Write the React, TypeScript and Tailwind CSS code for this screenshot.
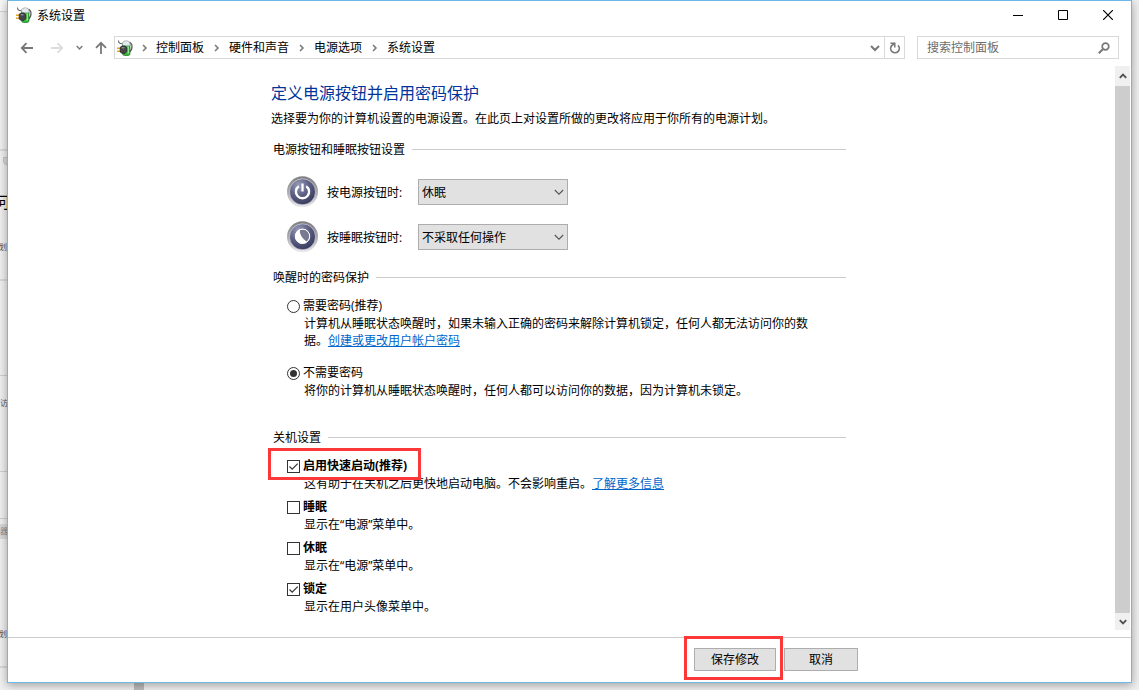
import { useState } from "react";
import type { ReactNode } from "react";

interface ChoiceProps {
  id: string;
  label: string;
  checked: boolean;
  onChange: () => void;
  highlighted?: boolean;
  children: ReactNode;
}

const crumbs = ["控制面板", "硬件和声音", "电源选项", "系统设置"];
const actions = ["不采取任何操作", "睡眠", "休眠", "关机"];

function Chevron({ className = "" }: { className?: string }) {
  return (
    <svg viewBox="0 0 10 10" className={className} fill="none" aria-hidden="true">
      <path d="M1 3l4 4 4-4" stroke="currentColor" strokeWidth="2" />
    </svg>
  );
}

function PowerPlugIcon() {
  return (
    <svg viewBox="0 0 16 16" className="size-4 shrink-0" aria-hidden="true">
      <path d="M1.500.5c0 2 1 3.200 3.500 3.200" fill="none" stroke="#666" strokeWidth="1.100" />
      <path d="M11.500 2.500c4.500-.5 4.500 6.500 1 9.500" fill="none" stroke="#555" strokeWidth="1.200" />
      <rect x="5.500" y="2" width="7.500" height="13.500" rx="2" fill="#35b53c" stroke="#2a6e2d" strokeWidth=".7" />
      <path d="M5.500 3.800c0-4 7.500-4 7.500 0v2H5.500z" fill="#e4eaee" stroke="#8a9699" strokeWidth=".6" />
      <path d="M10.500 6.500h1.500v7h-1.500z" fill="#8fe88c" />
      <path d="M0 8.300h4M0 11.300h4" stroke="#e8a91c" strokeWidth="1.600" />
      <path d="M3.200 7.200L5 6h3l1.800 2v3.500L8 13.300H5l-1.800-1.200z" fill="#45454a" stroke="#1d1d1f" strokeWidth=".7" />
      <path d="M4.800 7.800h2.700" stroke="#a5a5ab" />
    </svg>
  );
}

function RoundIcon({ kind }: { kind: "power" | "sleep" }) {
  return (
    <svg viewBox="0 0 32 32" className="size-8 shrink-0" aria-hidden="true">
      <defs>
        <linearGradient id={`${kind}-rim`} x1="0" y1="0" x2="0" y2="1">
          <stop offset="0" stopColor="#7e7e82" />
          <stop offset=".6" stopColor="#b4b4ba" />
          <stop offset="1" stopColor="#ededf0" />
        </linearGradient>
        <radialGradient id={`${kind}-face`} cx=".35" cy=".25" r=".8">
          <stop offset="0" stopColor="#9a9cba" />
          <stop offset=".5" stopColor="#5d5f83" />
          <stop offset="1" stopColor="#36385c" />
        </radialGradient>
      </defs>
      <circle cx="15.500" cy="15.800" r="15.500" fill={`url(#${kind}-rim)`} />
      <circle cx="15.500" cy="15.800" r="13" fill={`url(#${kind}-face)`} stroke="#e4e4ec" strokeWidth=".6" />
      {kind === "power" ? (
        <g fill="none" stroke="#fff" strokeWidth="2.300">
          <path d="M11.800 10.200a6.600 6.600 0 1 0 7.400 0" />
          <path d="M15.500 7.500v8" />
        </g>
      ) : (
        <g>
          <circle cx="15.500" cy="15.300" r="7.500" fill="#fff" />
          <path d="M13 8.800c-1 4 2.500 9 6.800 12 4.500-4 3-11.300-3.200-12.600z" fill="#777a92" />
          <circle cx="15.500" cy="15.300" r="7.200" fill="none" stroke="#fff" />
        </g>
      )}
    </svg>
  );
}

function Section({ title, className = "", children }: { title: string; className?: string; children: ReactNode }) {
  return (
    <section className={`pl-[2px] ${className}`}>
      <div className="flex items-center gap-[7px]">
        <h2>{title}</h2>
        <div className="h-px flex-1 bg-[#cccccc]" />
      </div>
      {children}
    </section>
  );
}

function ActionRow({
  id,
  kind,
  label,
  initial,
}: {
  id: string;
  kind: "power" | "sleep";
  label: string;
  initial: string;
}) {
  const [value, setValue] = useState(initial);

  return (
    <div className="flex items-center gap-2">
      <RoundIcon kind={kind} />
      <label htmlFor={id} className="w-[83px] whitespace-nowrap">
        {label}
      </label>
      <div className="relative">
        <select
          id={id}
          value={value}
          onChange={(e) => setValue(e.target.value)}
          className="block h-[26px] w-[150px] appearance-none border border-[#adadad] bg-[#e1e1e1] pr-5 pl-[3px]"
        >
          {actions.map((action) => (
            <option key={action}>{action}</option>
          ))}
        </select>
        <svg
          viewBox="0 0 10 10"
          className="pointer-events-none absolute top-2 right-1 size-[10px]"
          fill="none"
          aria-hidden="true"
        >
          <path d="M.8 3L5 7.200 9.200 3" stroke="#555" strokeWidth="1.100" />
        </svg>
      </div>
    </div>
  );
}

function RadioChoice({ id, label, checked, onChange, children }: ChoiceProps) {
  return (
    <div>
      <div className="flex items-start gap-[3px]">
        <input
          type="radio"
          name="wake-password"
          id={id}
          checked={checked}
          onChange={onChange}
          className="mt-[3px] grid size-[13px] shrink-0 appearance-none place-content-center rounded-full border border-[#333333] bg-white checked:before:block checked:before:size-[7px] checked:before:rounded-full checked:before:bg-[#333333] checked:before:content-['']"
        />
        <label htmlFor={id}>{label}</label>
      </div>
      <p className="mt-px max-w-[527px] pl-[17px]">{children}</p>
    </div>
  );
}

function CheckChoice({ id, label, checked, onChange, highlighted, children }: ChoiceProps) {
  return (
    <div>
      <div className="relative flex w-fit items-start gap-[3px]">
        <span className="relative mt-[3px] size-[13px] shrink-0">
          <input
            type="checkbox"
            id={id}
            checked={checked}
            onChange={onChange}
            className="block size-[13px] appearance-none border border-[#333333] bg-white"
          />
          {checked && (
            <svg
              viewBox="0 0 13 13"
              className="pointer-events-none absolute inset-0 size-[13px]"
              fill="none"
              aria-hidden="true"
            >
              <path d="M2.500 6.500l2.700 2.700L10.700 3.700" stroke="#333" strokeWidth="1.200" />
            </svg>
          )}
        </span>
        <label htmlFor={id} className="font-bold">
          {label}
        </label>
        {highlighted && (
          <div className="pointer-events-none absolute -top-[9px] -right-[14px] -bottom-[6px] -left-[19px] border-[3px] border-[#fc3838]" />
        )}
      </div>
      <p className="mt-px pl-[17px]">{children}</p>
    </div>
  );
}

function TitleBar() {
  return (
    <header className="flex h-7 items-center justify-between pl-2">
      <div className="flex items-center gap-[5px]">
        <PowerPlugIcon />
        <h1>系统设置</h1>
      </div>
      <div className="flex h-full">
        <button aria-label="最小化" className="grid w-[46px] place-items-center">
          <svg viewBox="0 0 10 10" className="size-[10px]">
            <path d="M0 5.500h10" stroke="#000" />
          </svg>
        </button>
        <button aria-label="最大化" className="grid w-11 place-items-center">
          <svg viewBox="0 0 10 10" className="size-[10px]">
            <path d="M.5.5h9v9h-9z" fill="none" stroke="#000" />
          </svg>
        </button>
        <button aria-label="关闭" className="grid w-[46px] place-items-center">
          <svg viewBox="0 0 10 10" className="size-[10px]">
            <path d="M0 0l10 10M10 0L0 10" stroke="#000" strokeWidth="1.200" />
          </svg>
        </button>
      </div>
    </header>
  );
}

function NavBar() {
  return (
    <nav className="flex h-[23px] items-center px-3 text-[#777777]">
      <div className="flex w-[94px] shrink-0 items-center">
        <button aria-label="后退" className="w-[30px]">
          <svg viewBox="0 0 14 14" className="size-[14px]" fill="none">
            <path d="M13 7H1.800M6.500 2.200L1.800 7l4.700 4.800" stroke="currentColor" strokeWidth="1.800" />
          </svg>
        </button>
        <button aria-label="前进" className="w-[26px] text-[#dddddd]">
          <svg viewBox="0 0 14 14" className="size-[14px]" fill="none">
            <path d="M1 7h11.200M7.500 2.200L12.200 7l-4.700 4.800" stroke="currentColor" strokeWidth="1.800" />
          </svg>
        </button>
        <button aria-label="最近的位置" className="w-[18px]">
          <Chevron className="size-[7px]" />
        </button>
        <button aria-label="上移">
          <svg viewBox="0 0 14 14" className="size-[14px]" fill="none">
            <path d="M7 13V1.800M2 6.800l5-5 5 5" stroke="currentColor" strokeWidth="1.800" />
          </svg>
        </button>
      </div>
      <div className="flex h-full flex-1 items-center border border-[#d9d9d9] pl-[2px]">
        <PowerPlugIcon />
        <ol className="flex flex-1 items-center">
          {crumbs.map((crumb, i) => (
            <li key={crumb} className="flex items-center">
              <span className={i === 0 ? "flex w-[23px] justify-center" : "flex w-[25px] justify-center"}>
                <svg viewBox="0 0 6 8" className="h-2 w-[6px]" fill="none" aria-hidden="true">
                  <path d="M1 1l3 3-3 3" stroke="currentColor" strokeWidth="1.500" />
                </svg>
              </span>
              <a href="#" className="whitespace-nowrap text-black">
                {crumb}
              </a>
            </li>
          ))}
        </ol>
        <button aria-label="以前的位置" className="grid w-[19px] place-items-center">
          <Chevron className="size-[10px]" />
        </button>
        <button aria-label="刷新" className="grid h-full w-5 place-items-center border-l border-[#d9d9d9]">
          <svg viewBox="0 0 12 12" className="size-3" fill="none">
            <path d="M9 3.300a4.300 4.300 0 1 1-6.300.3L5.300 1.800" stroke="currentColor" strokeWidth="1.700" />
            <path d="M1.500 1.300h4.300v4.200" stroke="currentColor" strokeWidth="1.500" />
          </svg>
        </button>
      </div>
      <div className="ml-3 flex h-full w-[202px] items-center border border-[#d9d9d9] pr-2 pl-[9px]">
        <input
          type="text"
          aria-label="搜索控制面板"
          placeholder="搜索控制面板"
          className="min-w-0 flex-1 outline-none placeholder:text-[#6d6d6d]"
        />
        <svg viewBox="0 0 12 12" className="size-3 shrink-0" fill="none" aria-hidden="true">
          <circle cx="7.500" cy="4.500" r="3.300" stroke="currentColor" strokeWidth="1.700" />
          <path d="M5 7L.8 11.200" stroke="currentColor" strokeWidth="2" />
        </svg>
      </div>
    </nav>
  );
}

function ScrollBar() {
  return (
    <div className="mr-px flex w-[15px] shrink-0 flex-col bg-[#f0f0f0] text-[#505050]">
      <button aria-label="向上滚动" className="grid h-5 place-items-center">
        <svg viewBox="0 0 8 8" className="size-2" fill="none">
          <path d="M.8 5.800L4 2.600l3.200 3.200" stroke="currentColor" strokeWidth="1.900" />
        </svg>
      </button>
      <div className="flex-1 bg-[#cdcdcd]" />
      <button aria-label="向下滚动" className="grid h-[17px] place-items-center">
        <svg viewBox="0 0 8 8" className="size-2" fill="none">
          <path d="M.8 2.200L4 5.400l3.200-3.200" stroke="currentColor" strokeWidth="1.900" />
        </svg>
      </button>
    </div>
  );
}

// Slivers of the page that stay visible around the window
function Backdrop() {
  return (
    <div className="absolute inset-0 overflow-hidden text-[8px] leading-[10px] text-[#555555]" aria-hidden="true">
      <div className="absolute top-0 left-0 h-3 w-10 border-b border-[#d4d4d4] bg-[#f7f7f7]" />
      <div className="absolute top-[149px] left-0 h-[2px] w-10 bg-[#d9d9d9]" />
      <div className="absolute top-[157px] left-[3px] h-2 w-10 rounded-bl border border-[#c4c4c4] bg-[#dcdcdc]" />
      <div className="absolute top-[194px] -left-[6px] text-base leading-4 text-black">何</div>
      <div className="absolute top-[242px] -left-[9px]">计划</div>
      <div className="absolute top-[279px] left-0 h-[2px] w-10 bg-[#d9d9d9]" />
      <div className="absolute top-[375px] left-0 h-px w-10 bg-[#d0d0d0]" />
      <div className="absolute top-[398px] left-0">访</div>
      <div className="absolute top-[471px] left-0 h-px w-10 bg-[#d0d0d0]" />
      <div className="absolute top-[518px] left-0 h-px w-10 bg-[#d0d0d0]" />
      <div className="absolute top-[524px] left-0 h-[15px] w-10 bg-[#d9d9d9] pt-[2px] text-[#888888]">器</div>
      <div className="absolute top-[629px] -left-[9px]">计划</div>
      <div className="absolute top-[666px] left-0 h-[2px] w-10 bg-[#d9d9d9]" />
      <div className="absolute bottom-0 left-[134px] h-5 w-[10px] bg-[#bcbcbc]" />
    </div>
  );
}

export default function App() {
  const [password, setPassword] = useState("none");
  const [shutdown, setShutdown] = useState({ fast: true, sleep: false, hibernate: false, lock: true });

  const toggle = (key: keyof typeof shutdown) => setShutdown((prev) => ({ ...prev, [key]: !prev[key] }));

  return (
    <div className="relative flex min-h-screen flex-col bg-[#f0f0f0] px-[7px] pb-[7px] font-['Open_Sans','Noto_Sans_CJK_SC',sans-serif] text-xs leading-[17px] text-black">
      <Backdrop />
      <div className="relative flex flex-1 flex-col border border-[#6cb8e8] bg-white shadow-[0_2px_9px_rgba(0,0,0,0.35)]">
        <TitleBar />
        <div className="py-[7px]">
          <NavBar />
        </div>

        <div className="flex flex-1 pb-[7px]">
          <main className="flex-1 pt-[17px] pr-[6px]">
            <div className="mx-auto max-w-[575px]">
              <h2 className="text-base leading-5 text-[#003399]">定义电源按钮并启用密码保护</h2>
              <p className="mt-[7px]">
                选择要为你的计算机设置的电源设置。在此页上对设置所做的更改将应用于你所有的电源计划。
              </p>

              <Section title="电源按钮和睡眠按钮设置" className="mt-[14px]">
                <div className="mt-[18px] flex flex-col gap-[13px] pl-[14px]">
                  <ActionRow id="power-action" kind="power" label="按电源按钮时:" initial="休眠" />
                  <ActionRow id="sleep-action" kind="sleep" label="按睡眠按钮时:" initial="不采取任何操作" />
                </div>
              </Section>

              <Section title="唤醒时的密码保护" className="mt-4">
                <div className="mt-[11px] flex flex-col gap-[15px] pl-[14px]">
                  <RadioChoice
                    id="need-password"
                    label="需要密码(推荐)"
                    checked={password === "required"}
                    onChange={() => setPassword("required")}
                  >
                    计算机从睡眠状态唤醒时，如果未输入正确的密码来解除计算机锁定，任何人都无法访问你的数据。
                    <a href="#" className="text-[#0066cc] underline">
                      创建或更改用户帐户密码
                    </a>
                  </RadioChoice>
                  <RadioChoice
                    id="no-password"
                    label="不需要密码"
                    checked={password === "none"}
                    onChange={() => setPassword("none")}
                  >
                    将你的计算机从睡眠状态唤醒时，任何人都可以访问你的数据，因为计算机未锁定。
                  </RadioChoice>
                </div>
              </Section>

              <Section title="关机设置" className="mt-[30px]">
                <div className="mt-[11px] flex flex-col gap-[6px] pl-[14px]">
                  <CheckChoice
                    id="fast-startup"
                    label="启用快速启动(推荐)"
                    checked={shutdown.fast}
                    onChange={() => toggle("fast")}
                    highlighted
                  >
                    这有助于在关机之后更快地启动电脑。不会影响重启。
                    <a href="#" className="text-[#0066cc] underline">
                      了解更多信息
                    </a>
                  </CheckChoice>
                  <CheckChoice id="sleep" label="睡眠" checked={shutdown.sleep} onChange={() => toggle("sleep")}>
                    显示在“电源”菜单中。
                  </CheckChoice>
                  <CheckChoice
                    id="hibernate"
                    label="休眠"
                    checked={shutdown.hibernate}
                    onChange={() => toggle("hibernate")}
                  >
                    显示在“电源”菜单中。
                  </CheckChoice>
                  <CheckChoice id="lock" label="锁定" checked={shutdown.lock} onChange={() => toggle("lock")}>
                    显示在用户头像菜单中。
                  </CheckChoice>
                </div>
              </Section>
            </div>
          </main>
          <ScrollBar />
        </div>

        <footer className="h-[45px] border-t border-[#cccccc] pt-[10px] pr-[10px]">
          <div className="mx-auto flex max-w-[587px] justify-end gap-2">
            <div className="relative">
              <button className="block h-[23px] w-[82px] border border-[#adadad] bg-[#e1e1e1]">保存修改</button>
              <div className="pointer-events-none absolute -top-3 -right-[7px] -bottom-[9px] -left-[10px] border-[3px] border-[#fc3838]" />
            </div>
            <button className="h-[23px] w-[74px] border border-[#adadad] bg-[#e1e1e1]">取消</button>
          </div>
        </footer>
      </div>
    </div>
  );
}
